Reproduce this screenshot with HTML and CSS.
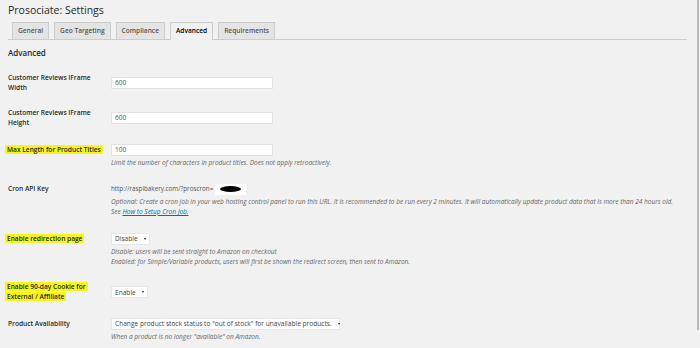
FILE: index.html
```html
<!DOCTYPE html>
<html lang="en">
<head>
    <meta charset="UTF-8">
    <title>Prosociate: Settings</title>
    <link rel="stylesheet" href="styles.css">
</head>
<body>
    <div class="page">
        <div class="wrap">
            <h1 class="page-title">Prosociate: Settings</h1>

            <nav class="tabs">
                <a class="tab">General</a>
                <a class="tab">Geo Targeting</a>
                <a class="tab">Compliance</a>
                <a class="tab active">Advanced</a>
                <a class="tab">Requirements</a>
            </nav>

            <h2 class="section-title">Advanced</h2>

            <div class="form-row">
                <div class="label">Customer Reviews IFrame Width</div>
                <div class="control"><div class="input">600</div></div>
            </div>

            <div class="form-row">
                <div class="label">Customer Reviews IFrame Height</div>
                <div class="control"><div class="input">600</div></div>
            </div>

            <div class="form-row">
                <div class="label"><mark>Max Length for Product Titles</mark></div>
                <div class="control"><div class="input">100</div></div>
                <p class="desc">Limit the number of characters in product titles. Does not apply retroactively.</p>
            </div>

            <div class="form-row">
                <div class="label">Cron API Key</div>
                <div class="control">
                    <span class="url">http://raspibakery.com/?proscron=</span>
                    <span class="key-box"><span class="redacted"></span></span>
                </div>
                <p class="desc">Optional: Create a cron job in your web hosting control panel to run this URL. It is recommended to be run every 2 minutes. It will automatically update product data that is more than 24 hours old.<br>See <a class="link">How to Setup Cron Job.</a></p>
            </div>

            <div class="form-row">
                <div class="label"><mark>Enable redirection page</mark></div>
                <div class="control">
                    <div class="select">Disable <span class="arrow"></span></div>
                </div>
                <p class="desc">Disable: users will be sent straight to Amazon on checkout<br>Enabled: for Simple/Variable products, users will first be shown the redirect screen, then sent to Amazon.</p>
            </div>

            <div class="form-row">
                <div class="label"><mark>Enable 90-day Cookie for External / Affiliate</mark></div>
                <div class="control">
                    <div class="select">Enable <span class="arrow"></span></div>
                </div>
            </div>

            <div class="form-row">
                <div class="label">Product Availability</div>
                <div class="control">
                    <div class="select wide">Change product stock status to "out of stock" for unavailable products. <span class="arrow"></span></div>
                </div>
                <p class="desc">When a product is no longer "available" on Amazon.</p>
            </div>
        </div>
        <div class="scroll-edge"></div>
    </div>
</body>
</html>
```

FILE: styles.css
```css
body {
    margin: 0;
    background: #f1f1f1;
    color: #23282d;
    font-family: 'Open Sans', 'Liberation Sans', sans-serif;
}

.page {
    display: flex;
    height: 348px;
    overflow: hidden;
}

.wrap {
    flex: 1;
    padding: 3px 10px 0 8px;
}

/* thin grey bar on the right edge */
.scroll-edge {
    width: 2px;
    height: 330px;
    background: #b9b9b9;
    margin-right: 1px;
}

.page-title {
    margin: 0;
    font-size: 10.5px;
    font-weight: 400;
    line-height: 14px;
    color: #23282d;
}

/* ===== TABS ===== */
.tabs {
    display: flex;
    gap: 5px;
    margin-top: 5px;
    padding-left: 4px;
    border-bottom: 1px solid #ccc;
    height: 17px;
}

.tab {
    box-sizing: border-box;
    height: 17px;
    padding: 0 5px;
    border: 1px solid #ccc;
    border-bottom: none;
    background: #e4e4e4;
    color: #555;
    font-size: 6.6px;
    font-weight: 600;
    line-height: 16px;
    text-decoration: none;
}

.tab.active {
    background: #f1f1f1;
    color: #000;
    height: 18px;
}

.section-title {
    margin: 7px 0 5px;
    font-size: 8px;
    font-weight: 600;
    line-height: 12px;
}

/* ===== FORM ROWS ===== */
.form-row {
    display: grid;
    grid-template-columns: 103px 1fr;
    align-items: center;
    padding: 8.5px 0 7px;
}

.label {
    font-size: 6.6px;
    font-weight: 600;
    line-height: 10px;
    width: 95px;
}

mark {
    background: #f8f41c;
    color: #23282d;
    padding: 0 2px;
    margin-left: -3px;
    -webkit-box-decoration-break: clone;
    box-decoration-break: clone;
}

.control {
    display: flex;
    align-items: center;
    font-size: 6.6px;
    color: #555;
    white-space: nowrap;
}

.input {
    box-sizing: border-box;
    width: 162px;
    height: 12px;
    padding-left: 3px;
    background: #fff;
    border: 1px solid #e2e2e2;
    line-height: 10px;
}

.url {
    font-size: 6.3px;
    line-height: 12px;
}

.key-box {
    display: flex;
    align-items: center;
    justify-content: center;
    width: 31px;
    height: 11px;
    margin-left: 2px;
    background: #fff;
}

.redacted {
    width: 21px;
    height: 6px;
    border-radius: 50%;
    background: #000;
}

.select {
    box-sizing: border-box;
    display: flex;
    align-items: center;
    justify-content: space-between;
    gap: 6px;
    height: 12px;
    padding: 0 3px;
    background: #fff;
    border: 1px solid #e6e6e6;
    color: #444;
}

.select.wide {
    width: 229px;
}

.arrow {
    width: 0;
    height: 0;
    border-left: 1.5px solid transparent;
    border-right: 1.5px solid transparent;
    border-top: 2.5px solid #222;
}

.desc {
    grid-column: 2;
    margin: 2px 0 0;
    font-size: 6.5px;
    font-style: italic;
    line-height: 10px;
    color: #666;
}

.link {
    color: #0073aa;
    text-decoration: underline;
}
```
